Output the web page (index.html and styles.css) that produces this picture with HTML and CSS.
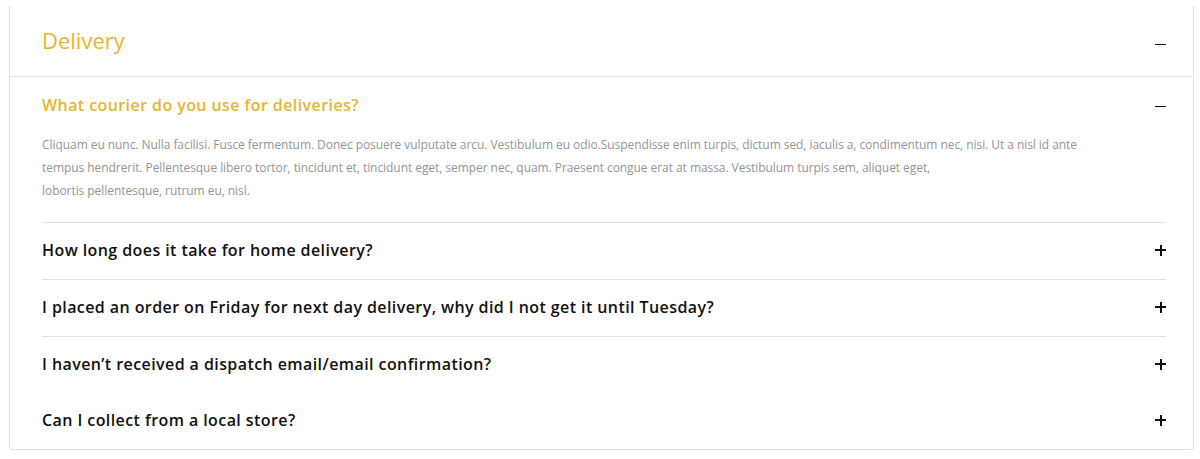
FILE: index.html
```html
<!DOCTYPE html>
<html>
<head>
<meta charset="utf-8">
<link rel="stylesheet" href="styles.css">
</head>
<body>
<div class="page">
  <section class="card">
    <header class="card-head">
      <h2 class="card-title">Delivery</h2>
      <span class="icon icon-minus"></span>
    </header>
    <div class="faq-list">
      <div class="faq open">
        <div class="faq-q">
          <span class="q-text">What courier do you use for deliveries?</span>
          <span class="icon icon-minus"></span>
        </div>
        <p class="faq-a">Cliquam eu nunc. Nulla facilisi. Fusce fermentum. Donec posuere vulputate arcu. Vestibulum eu odio.Suspendisse enim turpis, dictum sed, iaculis a, condimentum nec, nisi. Ut a nisl id ante<br>tempus hendrerit. Pellentesque libero tortor, tincidunt et, tincidunt eget, semper nec, quam. Praesent congue erat at massa. Vestibulum turpis sem, aliquet eget,<br>lobortis pellentesque, rutrum eu, nisl.</p>
      </div>
      <div class="faq">
        <div class="faq-q">
          <span class="q-text">How long does it take for home delivery?</span>
          <span class="icon icon-plus"></span>
        </div>
      </div>
      <div class="faq">
        <div class="faq-q">
          <span class="q-text">I placed an order on Friday for next day delivery, why did I not get it until Tuesday?</span>
          <span class="icon icon-plus"></span>
        </div>
      </div>
      <div class="faq no-line">
        <div class="faq-q">
          <span class="q-text">I haven’t received a dispatch email/email confirmation?</span>
          <span class="icon icon-plus"></span>
        </div>
      </div>
      <div class="faq last">
        <div class="faq-q">
          <span class="q-text">Can I collect from a local store?</span>
          <span class="icon icon-plus"></span>
        </div>
      </div>
    </div>
  </section>
</div>
</body>
</html>
```

FILE: styles.css
```css
* { box-sizing: border-box; }
html, body { margin: 0; padding: 0; background: #fff; }
body { font-family: "Open Sans", "Liberation Sans", sans-serif; }

.page { padding: 6px 6px 9px 9px; }

.card {
  border: 1px solid #e3e3e3;
  border-top: none;
  border-radius: 0 0 4px 4px;
  background: #fff;
}

.card-head {
  height: 71px;
  display: flex;
  align-items: center;
  justify-content: space-between;
  padding: 0 27px 0 32px;
  border-bottom: 1px solid #e3e3e3;
}
.card-title {
  margin: 0;
  font-size: 22px;
  font-weight: 400;
  color: #e8b52b;
  line-height: 1;
  position: relative;
  top: -1px;
}

.faq-list { padding: 0 27px 0 32px; }

.faq { border-bottom: 1px solid #e3e3e3; }
.faq.no-line, .faq.last { border-bottom: none; }

.faq-q {
  height: 56px;
  padding-bottom: 2px;
  display: flex;
  align-items: center;
  justify-content: space-between;
}
.faq.open .faq-q { padding-bottom: 0; }
.q-text {
  font-size: 16px;
  font-weight: 600;
  color: #111;
  letter-spacing: 0.42px;
}
.faq.open .q-text { color: #e8b52b; }

.faq-a {
  margin: 0;
  padding: 0 0 20px;
  font-size: 12px;
  line-height: 23px;
  color: #959595;
  letter-spacing: -0.06px;
}

.icon {
  position: relative;
  width: 11px;
  height: 11px;
  flex: none;
}
.icon::before, .icon::after {
  content: "";
  position: absolute;
  background: #111;
}
.icon::before { left: 0; right: 0; top: 5px; height: 1.5px; }
.icon-plus::before { top: 4.5px; height: 2px; }
.icon-plus::after { top: 0; bottom: 0; left: 4.5px; width: 2px; }
.icon-minus::after { display: none; }
.card-head .icon { top: 3px; }
.faq.open .icon { top: 1px; }
.faq:not(.open) .icon { top: 0; }
```
